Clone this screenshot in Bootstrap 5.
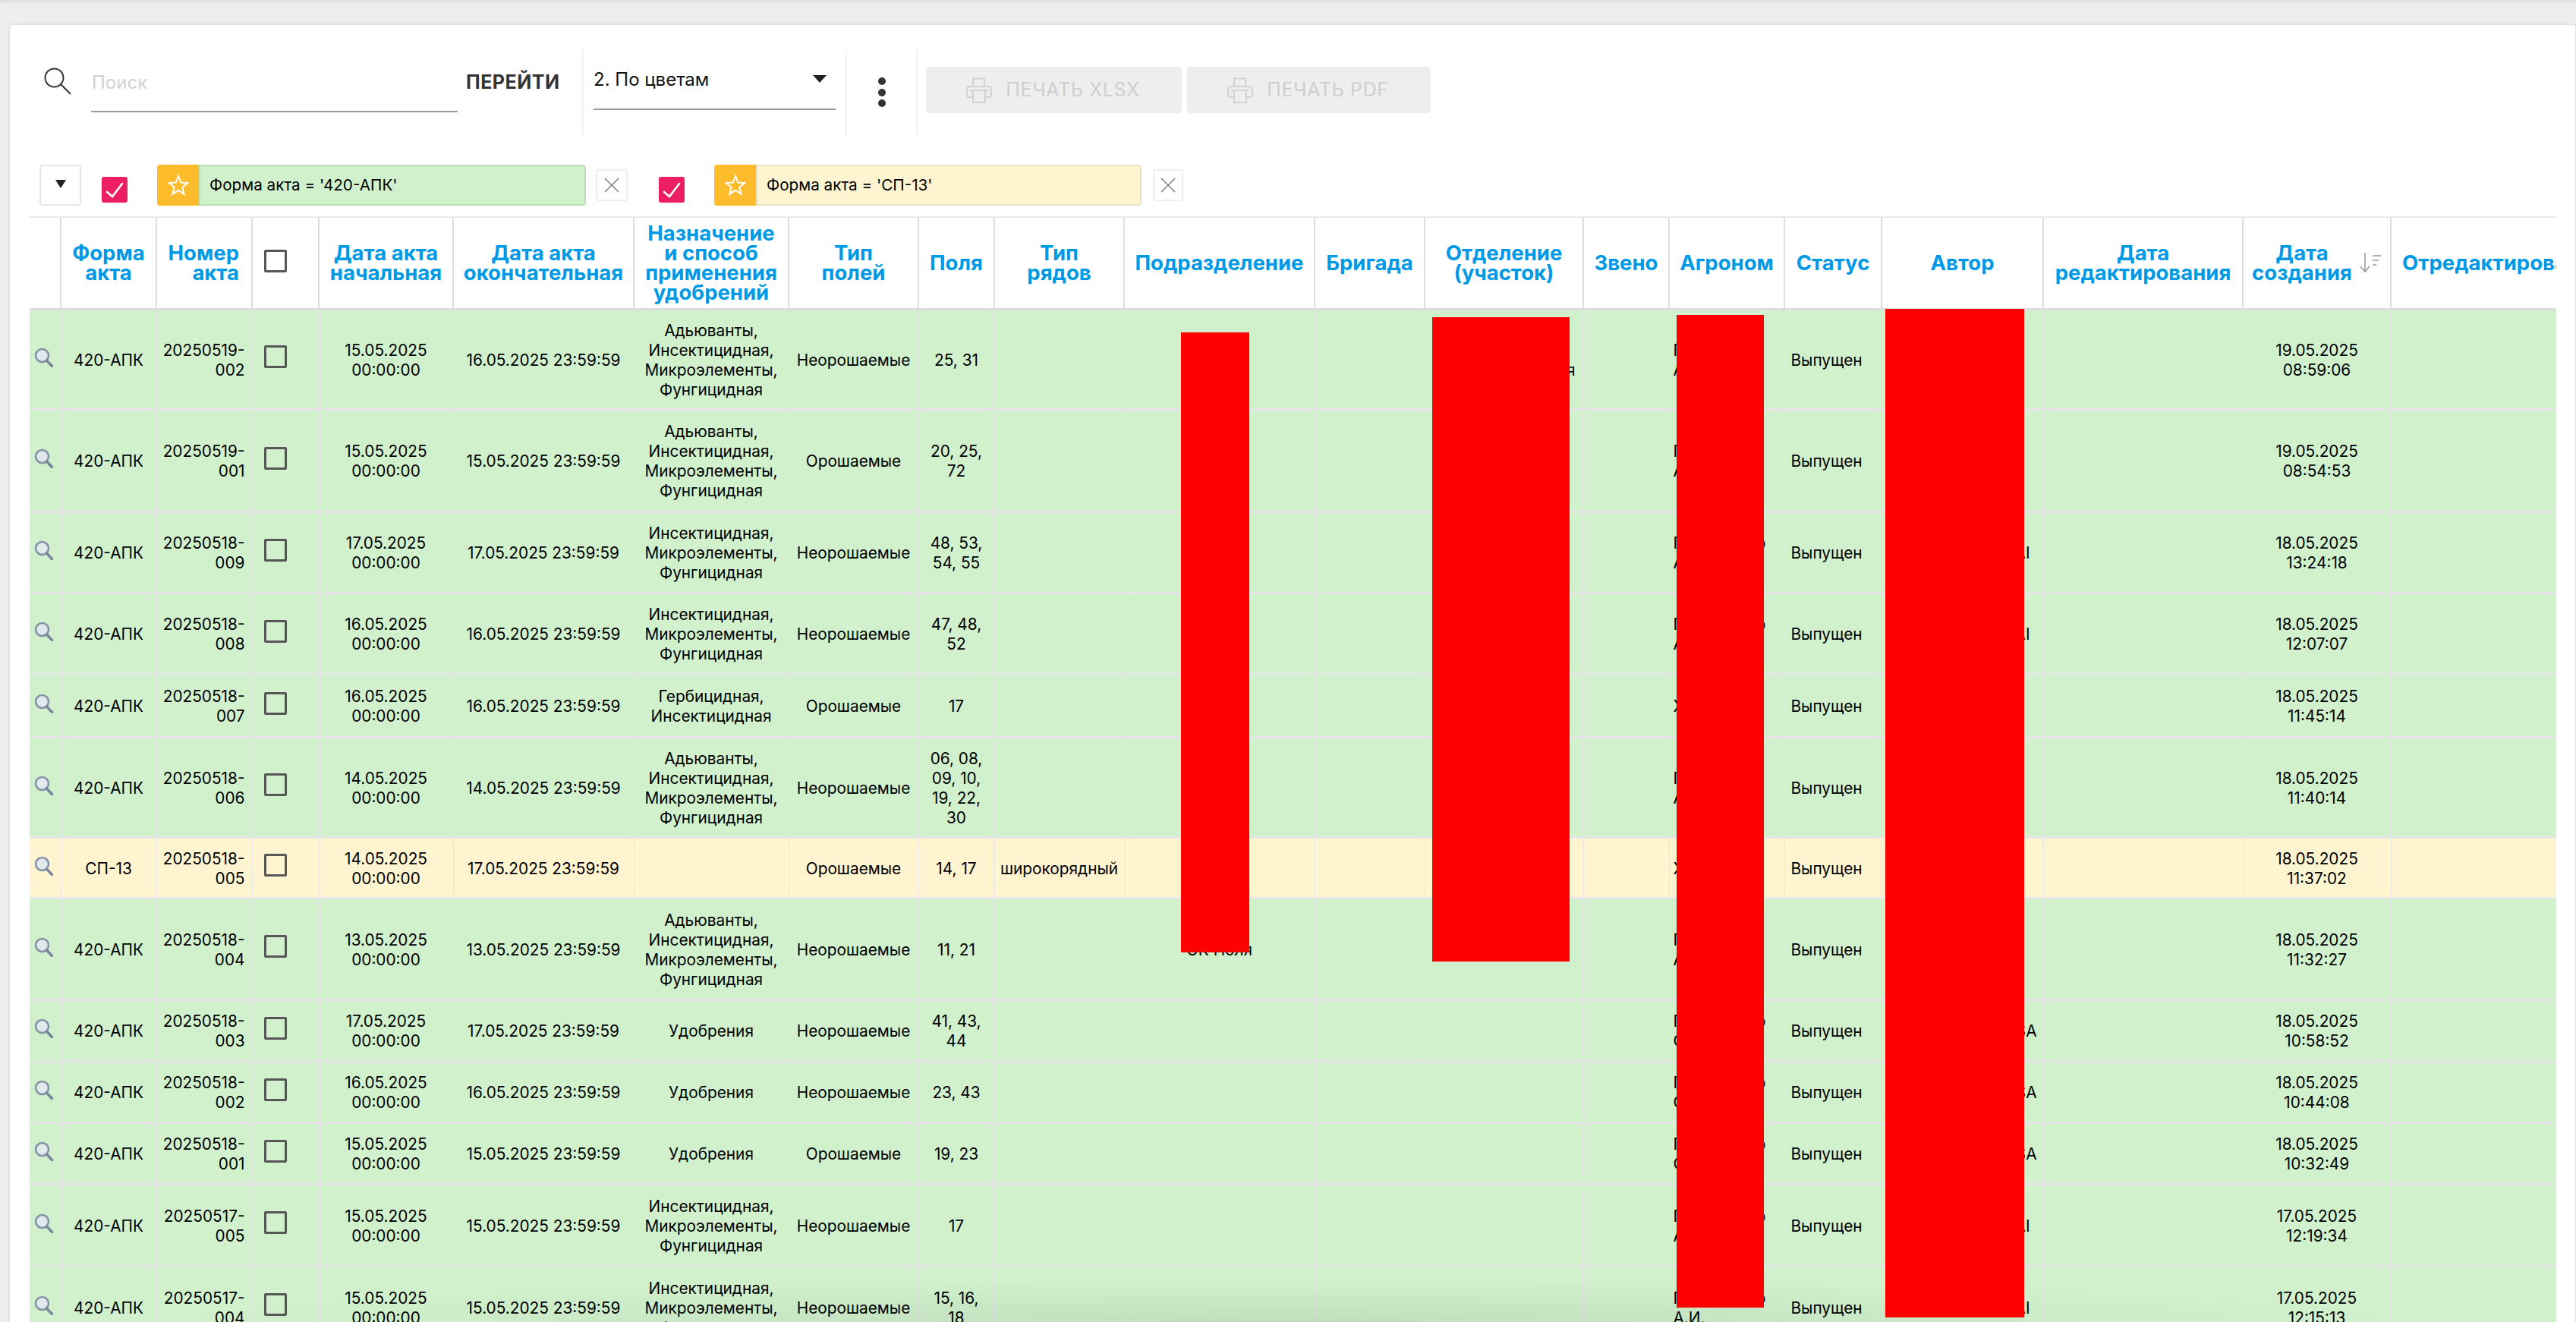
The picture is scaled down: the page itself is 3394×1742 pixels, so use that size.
<!DOCTYPE html>
<html lang="ru">
<head>
<meta charset="UTF-8">
<title>Акты</title>
<link href="https://cdn.jsdelivr.net/npm/bootstrap@5.3.3/dist/css/bootstrap.min.css" rel="stylesheet">
<style>
html,body{height:100%}
body{background:#eee;font-family:Inter,"Noto Sans",sans-serif;overflow:hidden;position:relative;box-shadow:inset 0 5px 5px -3px rgba(0,0,0,.08);color:#000}
.sheet{margin:33px 1px 0 13px;height:1800px;background:#fff;border:0;border-radius:4px 4px 0 0;box-shadow:0 0 5px rgba(0,0,0,.12)}

/* toolbar */
.tools{height:113px;margin-top:32px}
.tool-sep{border-right:2px solid #f2f2f2}
.tool-search{width:756px;padding-left:45px}
.search-ico{width:36px;height:36px;margin-top:24px;flex:none}
.search-box{width:483px;height:63px;margin:20px 0 0 26px;flex:none}
.search-box .form-control{height:100%;padding:0 0 15px 1px;border:0;border-bottom:2px solid #999;border-radius:0;font-size:24px;box-shadow:none}
.search-box .form-control::placeholder{color:#d2d2d2}
.go-btn{margin:23px 0 0 11px;padding:0;height:42px;font-size:25px;font-weight:700;color:#333;letter-spacing:.5px;border:0}
.tool-select{width:347px;padding:17px 0 0 13px}
.select-box{width:319px;height:63px;border-bottom:2px solid #999;font-size:24px;padding:0 12px 16px 0;color:#111}
.select-caret{width:0;height:0;border-left:9px solid transparent;border-right:9px solid transparent;border-top:10px solid #222;margin-bottom:2px}
.tool-dots{width:93px}
.dot{width:10px;height:10px;border-radius:50%;background:#333;margin:2.3px 0}
.tool-print{padding:23px 0 0 11px;gap:7px}
.print-btn,.print-btn:disabled{height:61px;border:0;border-radius:4px;background:#eee;color:#cfcfcf;opacity:1;font-size:25px;letter-spacing:.6px;padding:0 2px 0 0;gap:18px}
.print-xlsx{width:337px}
.print-pdf{width:321px}

/* chips */
.chips{height:54px;margin:39px 0 14px 39px}
.drop-btn{width:55px;height:54px;padding:0;border:2px solid #e6e6e6;border-radius:4px;background:#fff}
.drop-caret{display:block;margin:-4px auto 0;width:0;height:0;border-left:7px solid transparent;border-right:7px solid transparent;border-top:11px solid #222}
.pink-box{width:34px;height:34px;margin:16px 0 0 27px;border-radius:3px;background:#ec1f63;flex:none}
.chip{height:54px;margin-left:39px;border-radius:4px;overflow:hidden;font-size:20.7px}
.chip-star{width:55px;background:#fdbc2b;flex:none}
.chip-text{padding-left:12px;border:2px solid;border-left-width:2px;border-radius:0 4px 4px 0;flex:1}
.chip-green{width:565px}
.chip-green .chip-text{background:#d1f1cc;border-color:#bcdfb8}
.chip-yellow{width:563px}
.chip-yellow .chip-text{background:#fef4d0;border-color:#ede2bf}
.chip-x{height:42px;margin:6px 0 0 13px;padding:0;border:2px solid #eee;border-radius:4px;background:#fff}
.chip-x svg{display:block;margin:auto}
.x-a{width:42px}
.x-b{width:40px;margin-left:15px}
.ml-b{margin-left:41px}

/* table */
.table-clip{margin:0 25px 0 26px;overflow:hidden;border-top:2px solid #e8e8e8}
.act-table{table-layout:fixed;width:3411px;margin:0;border-collapse:collapse}
.act-table col:nth-child(1){width:41px}
.act-table col:nth-child(2){width:126px}
.act-table col:nth-child(3){width:126px}
.act-table col:nth-child(4){width:88px}
.act-table col:nth-child(5){width:177px}
.act-table col:nth-child(6){width:238px}
.act-table col:nth-child(7){width:204px}
.act-table col:nth-child(8){width:171px}
.act-table col:nth-child(9){width:100px}
.act-table col:nth-child(10){width:171px}
.act-table col:nth-child(11){width:251px}
.act-table col:nth-child(12){width:145px}
.act-table col:nth-child(13){width:209px}
.act-table col:nth-child(14){width:113px}
.act-table col:nth-child(15){width:152px}
.act-table col:nth-child(16){width:128px}
.act-table col:nth-child(17){width:213px}
.act-table col:nth-child(18){width:263px}
.act-table col:nth-child(19){width:195px}
.act-table col:nth-child(20){width:300px}
.table.act-table>:not(caption)>*>*{padding:3px 6px 0;border:solid #e6e6e6;border-width:3px 1px;font-size:20.8px;line-height:26px;color:#000;box-shadow:none;vertical-align:middle;text-align:center}
.table.act-table>thead>tr>th{height:120px;padding:0 6px;border-width:0 2px 3px;border-color:#dedede;font-size:27.5px;line-height:26px;font-weight:700;color:#0099e5;background:#fff}
.table.act-table>tbody>tr>td:first-child{padding:0 0 5px 6px;text-align:left}
.table.act-table>:not(caption)>*>*:first-child{border-left:0}
.table.act-table>:not(caption)>tr>.cell-num{text-align:right;padding-right:9px}
.table.act-table>tbody>tr>.cell-check{text-align:left;padding:0 0 6px 15px}
.table.act-table>thead>tr>.cell-check{text-align:left;padding:0 0 4px 15px}
.table.act-table>tbody>tr>.cell-left{text-align:left;padding-left:8px}
.table.act-table>thead>tr>.head-edit{text-align:left;white-space:nowrap;padding-left:14px}
.table.act-table>thead>tr>.head-num{text-align:right;padding-right:16px}
.table.act-table>thead>tr>.head-sort{padding:0 10px 0 4px}
.table.act-table>tbody>tr>.cell-agr{text-align:left;padding:3px 24px 0 5px}
.table.act-table>tbody>tr>.cell-author{text-align:right}
.table.act-table>tbody>tr>.pad-ai{padding-right:17px}
.table.act-table>tbody>tr>.pad-sa{padding-right:8px}
.table.act-table>tbody>tr>.cell-tail{text-align:right;padding-right:10px}
.row-green{--bs-table-bg:#d1f1cc}
.row-yellow{--bs-table-bg:#fef4d0}
tbody tr:nth-child(1){height:132px}
tbody tr:nth-child(2){height:135px}
tbody tr:nth-child(3){height:107px}
tbody tr:nth-child(4){height:107px}
tbody tr:nth-child(5){height:83px}
tbody tr:nth-child(6){height:132px}
tbody tr:nth-child(7){height:80px}
tbody tr:nth-child(8){height:134px}
tbody tr:nth-child(9){height:81px}
tbody tr:nth-child(10){height:81px}
tbody tr:nth-child(11){height:81px}
tbody tr:nth-child(12){height:108px}
tbody tr:nth-child(13){height:108px}
.tick{display:block;width:30px;height:30px;border:3px solid #575757;border-radius:2px}
.sort-ico{width:30px;height:28px;margin-left:3px;flex:none}
.lens{display:block;width:26px;height:26px}

/* bottom shade and blanked parts of the picture */
.bottom-shade{position:absolute;left:0;right:0;bottom:0;height:60px;background:radial-gradient(ellipse 44% 100% at 50% 100%,rgba(0,0,0,.08),transparent)}
.redact{position:absolute;background:#f00}
.redact-a{left:1556px;top:438px;width:90px;height:817px}
.redact-b{left:1887px;top:418px;width:181px;height:849px}
.redact-c{left:2209px;top:415px;width:115px;height:1308px}
.redact-d{left:2484px;top:407px;width:183px;height:1329px}
</style>
</head>
<body>
<svg width="0" height="0" class="position-absolute">
  <defs>
    <symbol id="lens" viewBox="0 0 26 26"><circle cx="10.5" cy="10.5" r="8.5" fill="#e2e9ec" stroke="#8594a5" stroke-width="2.6"/><path d="M16.500 17l7 7.500" stroke="#76859a" stroke-width="3.400" stroke-linecap="round"/></symbol>
    <symbol id="printer" viewBox="0 0 34 34" fill="none" stroke="#d2d2d2" stroke-width="2"><path d="M9 12V1.500h15V12M8 26H3.500Q1 26 1 23V15q0-3 3-3h26q3 0 3 3v8q0 3-2.500 3H26M5 17h24M9 17h16v16H9z"/></symbol>
    <symbol id="star" viewBox="0 0 28 28" fill="none" stroke="#fff" stroke-width="2"><path d="M14 2l3.300 8.500 9 .6-7 5.700 2.300 8.900L14 20.800l-7.600 4.900 2.300-8.900-7-5.700 9-.6z"/></symbol>
    <symbol id="check" viewBox="0 0 34 34" fill="none" stroke="#fff" stroke-width="2.600" stroke-linecap="round"><path d="M7 20l7 6L27 9"/></symbol>
    <symbol id="cross" viewBox="0 0 22 22" fill="none" stroke="#777" stroke-width="1.400"><path d="M2 2l18 18M20 2L2 20"/></symbol>
  </defs>
</svg>

<div class="card sheet">
  <div class="tools d-flex">
    <div class="tool-search tool-sep d-flex align-items-start">
      <svg class="search-ico" viewBox="0 0 36 36" fill="none" stroke="#333" stroke-width="2"><circle cx="13.500" cy="13.500" r="12"/><path d="M22.500 22.500L35 35"/></svg>
      <div class="search-box"><input class="form-control" type="text" placeholder="Поиск"></div>
      <button class="btn go-btn" type="button">ПЕРЕЙТИ</button>
    </div>
    <div class="tool-select tool-sep">
      <div class="select-box d-flex justify-content-between align-items-center">
        <span>2. По цветам</span><span class="select-caret"></span>
      </div>
    </div>
    <div class="tool-dots tool-sep d-flex flex-column align-items-center justify-content-center">
      <span class="dot"></span><span class="dot"></span><span class="dot"></span>
    </div>
    <div class="tool-print d-flex align-items-start">
      <button class="btn print-btn print-xlsx d-flex align-items-center justify-content-center" disabled><svg width="34" height="34"><use href="#printer"/></svg>ПЕЧАТЬ XLSX</button>
      <button class="btn print-btn print-pdf d-flex align-items-center justify-content-center" disabled><svg width="34" height="34"><use href="#printer"/></svg>ПЕЧАТЬ PDF</button>
    </div>
  </div>

  <div class="chips d-flex align-items-start">
    <button class="drop-btn" type="button"><span class="drop-caret"></span></button>
    <span class="pink-box"><svg width="34" height="34" class="d-block"><use href="#check"/></svg></span>
    <div class="chip chip-green d-flex">
      <span class="chip-star d-flex align-items-center justify-content-center"><svg width="28" height="28"><use href="#star"/></svg></span>
      <span class="chip-text d-flex align-items-center">Форма акта = '420-АПК'</span>
    </div>
    <button class="chip-x x-a" type="button"><svg width="22" height="22"><use href="#cross"/></svg></button>
    <span class="pink-box ml-b"><svg width="34" height="34" class="d-block"><use href="#check"/></svg></span>
    <div class="chip chip-yellow d-flex">
      <span class="chip-star d-flex align-items-center justify-content-center"><svg width="28" height="28"><use href="#star"/></svg></span>
      <span class="chip-text d-flex align-items-center">Форма акта = 'СП-13'</span>
    </div>
    <button class="chip-x x-b" type="button"><svg width="22" height="22"><use href="#cross"/></svg></button>
  </div>

  <div class="table-clip">
    <table class="table act-table">
      <colgroup><col><col><col><col><col><col><col><col><col><col><col><col><col><col><col><col><col><col><col><col></colgroup>
      <thead>
        <tr>
          <th></th><th>Форма акта</th><th class="head-num">Номер акта</th><th class="cell-check"><span class="tick"></span></th>
          <th>Дата акта начальная</th><th>Дата акта окончательная</th><th>Назначение и способ применения удобрений</th>
          <th>Тип<br>полей</th><th>Поля</th><th>Тип<br>рядов</th><th>Подразделение</th><th>Бригада</th><th>Отделение (участок)</th>
          <th>Звено</th><th>Агроном</th><th>Статус</th><th>Автор</th><th>Дата редактирования</th>
          <th class="head-sort"><div class="d-flex align-items-center justify-content-center"><span>Дата создания</span><svg class="sort-ico" viewBox="0 0 30 28" fill="none" stroke="#999" stroke-width="1.500"><path d="M7 1v24M1 19l6 7 6-7M17 5h11M17 11h8M17 17h5"/></svg></div></th>
          <th class="head-edit">Отредактировано</th>
        </tr>
      </thead>
      <tbody>
        <tr class="row-green"><td><svg class="lens"><use href="#lens"/></svg></td><td>420-АПК</td><td class="cell-num">20250519-002</td><td class="cell-check"><span class="tick"></span></td><td>15.05.2025 00:00:00</td><td>16.05.2025 23:59:59</td><td>Адьюванты, Инсектицидная, Микроэлементы, Фунгицидная</td><td>Неорошаемые</td><td>25, 31</td><td></td><td></td><td></td><td class="cell-tail"><br>я</td><td></td><td class="cell-agr">П<br>А.</td><td class="cell-left">Выпущен</td><td></td><td></td><td>19.05.2025 08:59:06</td><td></td></tr>
        <tr class="row-green"><td><svg class="lens"><use href="#lens"/></svg></td><td>420-АПК</td><td class="cell-num">20250519-001</td><td class="cell-check"><span class="tick"></span></td><td>15.05.2025 00:00:00</td><td>15.05.2025 23:59:59</td><td>Адьюванты, Инсектицидная, Микроэлементы, Фунгицидная</td><td>Орошаемые</td><td>20, 25, 72</td><td></td><td></td><td></td><td></td><td></td><td class="cell-agr">П<br>А.</td><td class="cell-left">Выпущен</td><td></td><td></td><td>19.05.2025 08:54:53</td><td></td></tr>
        <tr class="row-green"><td><svg class="lens"><use href="#lens"/></svg></td><td>420-АПК</td><td class="cell-num">20250518-009</td><td class="cell-check"><span class="tick"></span></td><td>17.05.2025 00:00:00</td><td>17.05.2025 23:59:59</td><td>Инсектицидная, Микроэлементы, Фунгицидная</td><td>Неорошаемые</td><td>48, 53, 54, 55</td><td></td><td></td><td></td><td></td><td></td><td class="cell-agr"><div class="d-flex justify-content-between"><span>П</span><span>о</span></div>А.</td><td class="cell-left">Выпущен</td><td class="cell-author pad-ai">AI</td><td></td><td>18.05.2025 13:24:18</td><td></td></tr>
        <tr class="row-green"><td><svg class="lens"><use href="#lens"/></svg></td><td>420-АПК</td><td class="cell-num">20250518-008</td><td class="cell-check"><span class="tick"></span></td><td>16.05.2025 00:00:00</td><td>16.05.2025 23:59:59</td><td>Инсектицидная, Микроэлементы, Фунгицидная</td><td>Неорошаемые</td><td>47, 48, 52</td><td></td><td></td><td></td><td></td><td></td><td class="cell-agr"><div class="d-flex justify-content-between"><span>П</span><span>о</span></div>А.</td><td class="cell-left">Выпущен</td><td class="cell-author pad-ai">AI</td><td></td><td>18.05.2025 12:07:07</td><td></td></tr>
        <tr class="row-green"><td><svg class="lens"><use href="#lens"/></svg></td><td>420-АПК</td><td class="cell-num">20250518-007</td><td class="cell-check"><span class="tick"></span></td><td>16.05.2025 00:00:00</td><td>16.05.2025 23:59:59</td><td>Гербицидная, Инсектицидная</td><td>Орошаемые</td><td>17</td><td></td><td></td><td></td><td></td><td></td><td class="cell-agr">Х</td><td class="cell-left">Выпущен</td><td></td><td></td><td>18.05.2025 11:45:14</td><td></td></tr>
        <tr class="row-green"><td><svg class="lens"><use href="#lens"/></svg></td><td>420-АПК</td><td class="cell-num">20250518-006</td><td class="cell-check"><span class="tick"></span></td><td>14.05.2025 00:00:00</td><td>14.05.2025 23:59:59</td><td>Адьюванты, Инсектицидная, Микроэлементы, Фунгицидная</td><td>Неорошаемые</td><td>06, 08, 09, 10, 19, 22, 30</td><td></td><td></td><td></td><td></td><td></td><td class="cell-agr">П<br>А.</td><td class="cell-left">Выпущен</td><td></td><td></td><td>18.05.2025 11:40:14</td><td></td></tr>
        <tr class="row-yellow"><td><svg class="lens"><use href="#lens"/></svg></td><td>СП-13</td><td class="cell-num">20250518-005</td><td class="cell-check"><span class="tick"></span></td><td>14.05.2025 00:00:00</td><td>17.05.2025 23:59:59</td><td></td><td>Орошаемые</td><td>14, 17</td><td>широкорядный</td><td></td><td></td><td></td><td></td><td class="cell-agr">Х</td><td class="cell-left">Выпущен</td><td></td><td></td><td>18.05.2025 11:37:02</td><td></td></tr>
        <tr class="row-green"><td><svg class="lens"><use href="#lens"/></svg></td><td>420-АПК</td><td class="cell-num">20250518-004</td><td class="cell-check"><span class="tick"></span></td><td>13.05.2025 00:00:00</td><td>13.05.2025 23:59:59</td><td>Адьюванты, Инсектицидная, Микроэлементы, Фунгицидная</td><td>Неорошаемые</td><td>11, 21</td><td></td><td>ОК Ноля</td><td></td><td></td><td></td><td class="cell-agr">П<br>А.</td><td class="cell-left">Выпущен</td><td></td><td></td><td>18.05.2025 11:32:27</td><td></td></tr>
        <tr class="row-green"><td><svg class="lens"><use href="#lens"/></svg></td><td>420-АПК</td><td class="cell-num">20250518-003</td><td class="cell-check"><span class="tick"></span></td><td>17.05.2025 00:00:00</td><td>17.05.2025 23:59:59</td><td>Удобрения</td><td>Неорошаемые</td><td>41, 43, 44</td><td></td><td></td><td></td><td></td><td></td><td class="cell-agr"><div class="d-flex justify-content-between"><span>П</span><span>о</span></div>С.</td><td class="cell-left">Выпущен</td><td class="cell-author pad-sa">SA</td><td></td><td>18.05.2025 10:58:52</td><td></td></tr>
        <tr class="row-green"><td><svg class="lens"><use href="#lens"/></svg></td><td>420-АПК</td><td class="cell-num">20250518-002</td><td class="cell-check"><span class="tick"></span></td><td>16.05.2025 00:00:00</td><td>16.05.2025 23:59:59</td><td>Удобрения</td><td>Неорошаемые</td><td>23, 43</td><td></td><td></td><td></td><td></td><td></td><td class="cell-agr"><div class="d-flex justify-content-between"><span>П</span><span>о</span></div>С.</td><td class="cell-left">Выпущен</td><td class="cell-author pad-sa">SA</td><td></td><td>18.05.2025 10:44:08</td><td></td></tr>
        <tr class="row-green"><td><svg class="lens"><use href="#lens"/></svg></td><td>420-АПК</td><td class="cell-num">20250518-001</td><td class="cell-check"><span class="tick"></span></td><td>15.05.2025 00:00:00</td><td>15.05.2025 23:59:59</td><td>Удобрения</td><td>Орошаемые</td><td>19, 23</td><td></td><td></td><td></td><td></td><td></td><td class="cell-agr"><div class="d-flex justify-content-between"><span>П</span><span>о</span></div>С.</td><td class="cell-left">Выпущен</td><td class="cell-author pad-sa">SA</td><td></td><td>18.05.2025 10:32:49</td><td></td></tr>
        <tr class="row-green"><td><svg class="lens"><use href="#lens"/></svg></td><td>420-АПК</td><td class="cell-num">20250517-005</td><td class="cell-check"><span class="tick"></span></td><td>15.05.2025 00:00:00</td><td>15.05.2025 23:59:59</td><td>Инсектицидная, Микроэлементы, Фунгицидная</td><td>Неорошаемые</td><td>17</td><td></td><td></td><td></td><td></td><td></td><td class="cell-agr"><div class="d-flex justify-content-between"><span>П</span><span>о</span></div>А.</td><td class="cell-left">Выпущен</td><td class="cell-author pad-ai">AI</td><td></td><td>17.05.2025 12:19:34</td><td></td></tr>
        <tr class="row-green"><td><svg class="lens"><use href="#lens"/></svg></td><td>420-АПК</td><td class="cell-num">20250517-004</td><td class="cell-check"><span class="tick"></span></td><td>15.05.2025 00:00:00</td><td>15.05.2025 23:59:59</td><td>Инсектицидная, Микроэлементы, Фунгицидная</td><td>Неорошаемые</td><td>15, 16,<br>18</td><td></td><td></td><td></td><td></td><td></td><td class="cell-agr"><div class="d-flex justify-content-between"><span>П</span><span>о</span></div>А.И.</td><td class="cell-left">Выпущен</td><td class="cell-author pad-ai">AI</td><td></td><td>17.05.2025 12:15:13</td><td></td></tr>
      </tbody>
    </table>
  </div>
</div>

<div class="bottom-shade"></div>
<div class="redact redact-a"></div>
<div class="redact redact-b"></div>
<div class="redact redact-c"></div>
<div class="redact redact-d"></div>
</body>
</html>
